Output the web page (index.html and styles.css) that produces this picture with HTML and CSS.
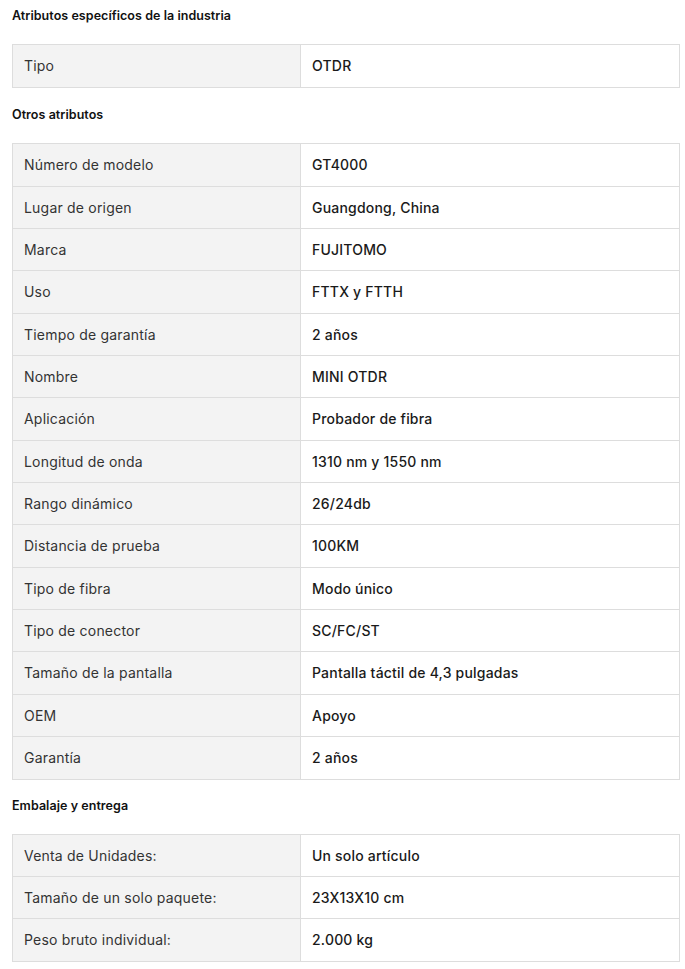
FILE: index.html
```html
<!DOCTYPE html>
<html lang="es">
<head>
<meta charset="utf-8">
<link rel="stylesheet" href="styles.css">
</head>
<body>
<div class="page">
  <h3 class="title">Atributos específicos de la industria</h3>
  <table class="attrs single">
    <tr><td class="k">Tipo</td><td class="v">OTDR</td></tr>
  </table>

  <h3 class="title">Otros atributos</h3>
  <table class="attrs">
    <tr><td class="k">Número de modelo</td><td class="v">GT4000</td></tr>
    <tr><td class="k">Lugar de origen</td><td class="v">Guangdong, China</td></tr>
    <tr><td class="k">Marca</td><td class="v">FUJITOMO</td></tr>
    <tr><td class="k">Uso</td><td class="v">FTTX y FTTH</td></tr>
    <tr><td class="k">Tiempo de garantía</td><td class="v">2 años</td></tr>
    <tr><td class="k">Nombre</td><td class="v">MINI OTDR</td></tr>
    <tr><td class="k">Aplicación</td><td class="v">Probador de fibra</td></tr>
    <tr><td class="k">Longitud de onda</td><td class="v">1310 nm y 1550 nm</td></tr>
    <tr><td class="k">Rango dinámico</td><td class="v">26/24db</td></tr>
    <tr><td class="k">Distancia de prueba</td><td class="v">100KM</td></tr>
    <tr><td class="k">Tipo de fibra</td><td class="v">Modo único</td></tr>
    <tr><td class="k">Tipo de conector</td><td class="v">SC/FC/ST</td></tr>
    <tr><td class="k">Tamaño de la pantalla</td><td class="v">Pantalla táctil de 4,3 pulgadas</td></tr>
    <tr><td class="k">OEM</td><td class="v">Apoyo</td></tr>
    <tr><td class="k">Garantía</td><td class="v">2 años</td></tr>
  </table>

  <h3 class="title last">Embalaje y entrega</h3>
  <table class="attrs">
    <tr><td class="k">Venta de Unidades:</td><td class="v">Un solo artículo</td></tr>
    <tr><td class="k">Tamaño de un solo paquete:</td><td class="v">23X13X10 cm</td></tr>
    <tr><td class="k">Peso bruto individual:</td><td class="v">2.000 kg</td></tr>
  </table>
</div>
</body>
</html>
```

FILE: styles.css
```css
html, body {
  margin: 0;
  padding: 0;
  background: #fff;
}
body {
  font-family: Inter, "Noto Sans", "Liberation Sans", sans-serif;
  color: #222;
}
.page {
  padding: 6px 6px 0 12px;
}
.title {
  margin: 17px 0 18px;
  font-size: 12.5px;
  line-height: 20px;
  font-weight: 600;
  letter-spacing: 0.05px;
  color: #111;
}
.title:first-child {
  margin-top: 0;
}
.title.last {
  margin-top: 16px;
}
.attrs {
  width: 668px;
  border-collapse: collapse;
  table-layout: fixed;
  font-size: 14px;
  letter-spacing: 0.2px;
}
.attrs td {
  border: 1px solid #dddddd;
  padding: 10px 11px 10px 11px;
  line-height: 21.35px;
  vertical-align: middle;
}
.attrs.single td {
  padding-bottom: 11px;
}
.attrs .k {
  width: 265px;
  background: #f3f3f3;
  color: #333;
}
.attrs .v {
  color: #1a1a1a;
  font-weight: 500;
  background: #fff;
}
```
